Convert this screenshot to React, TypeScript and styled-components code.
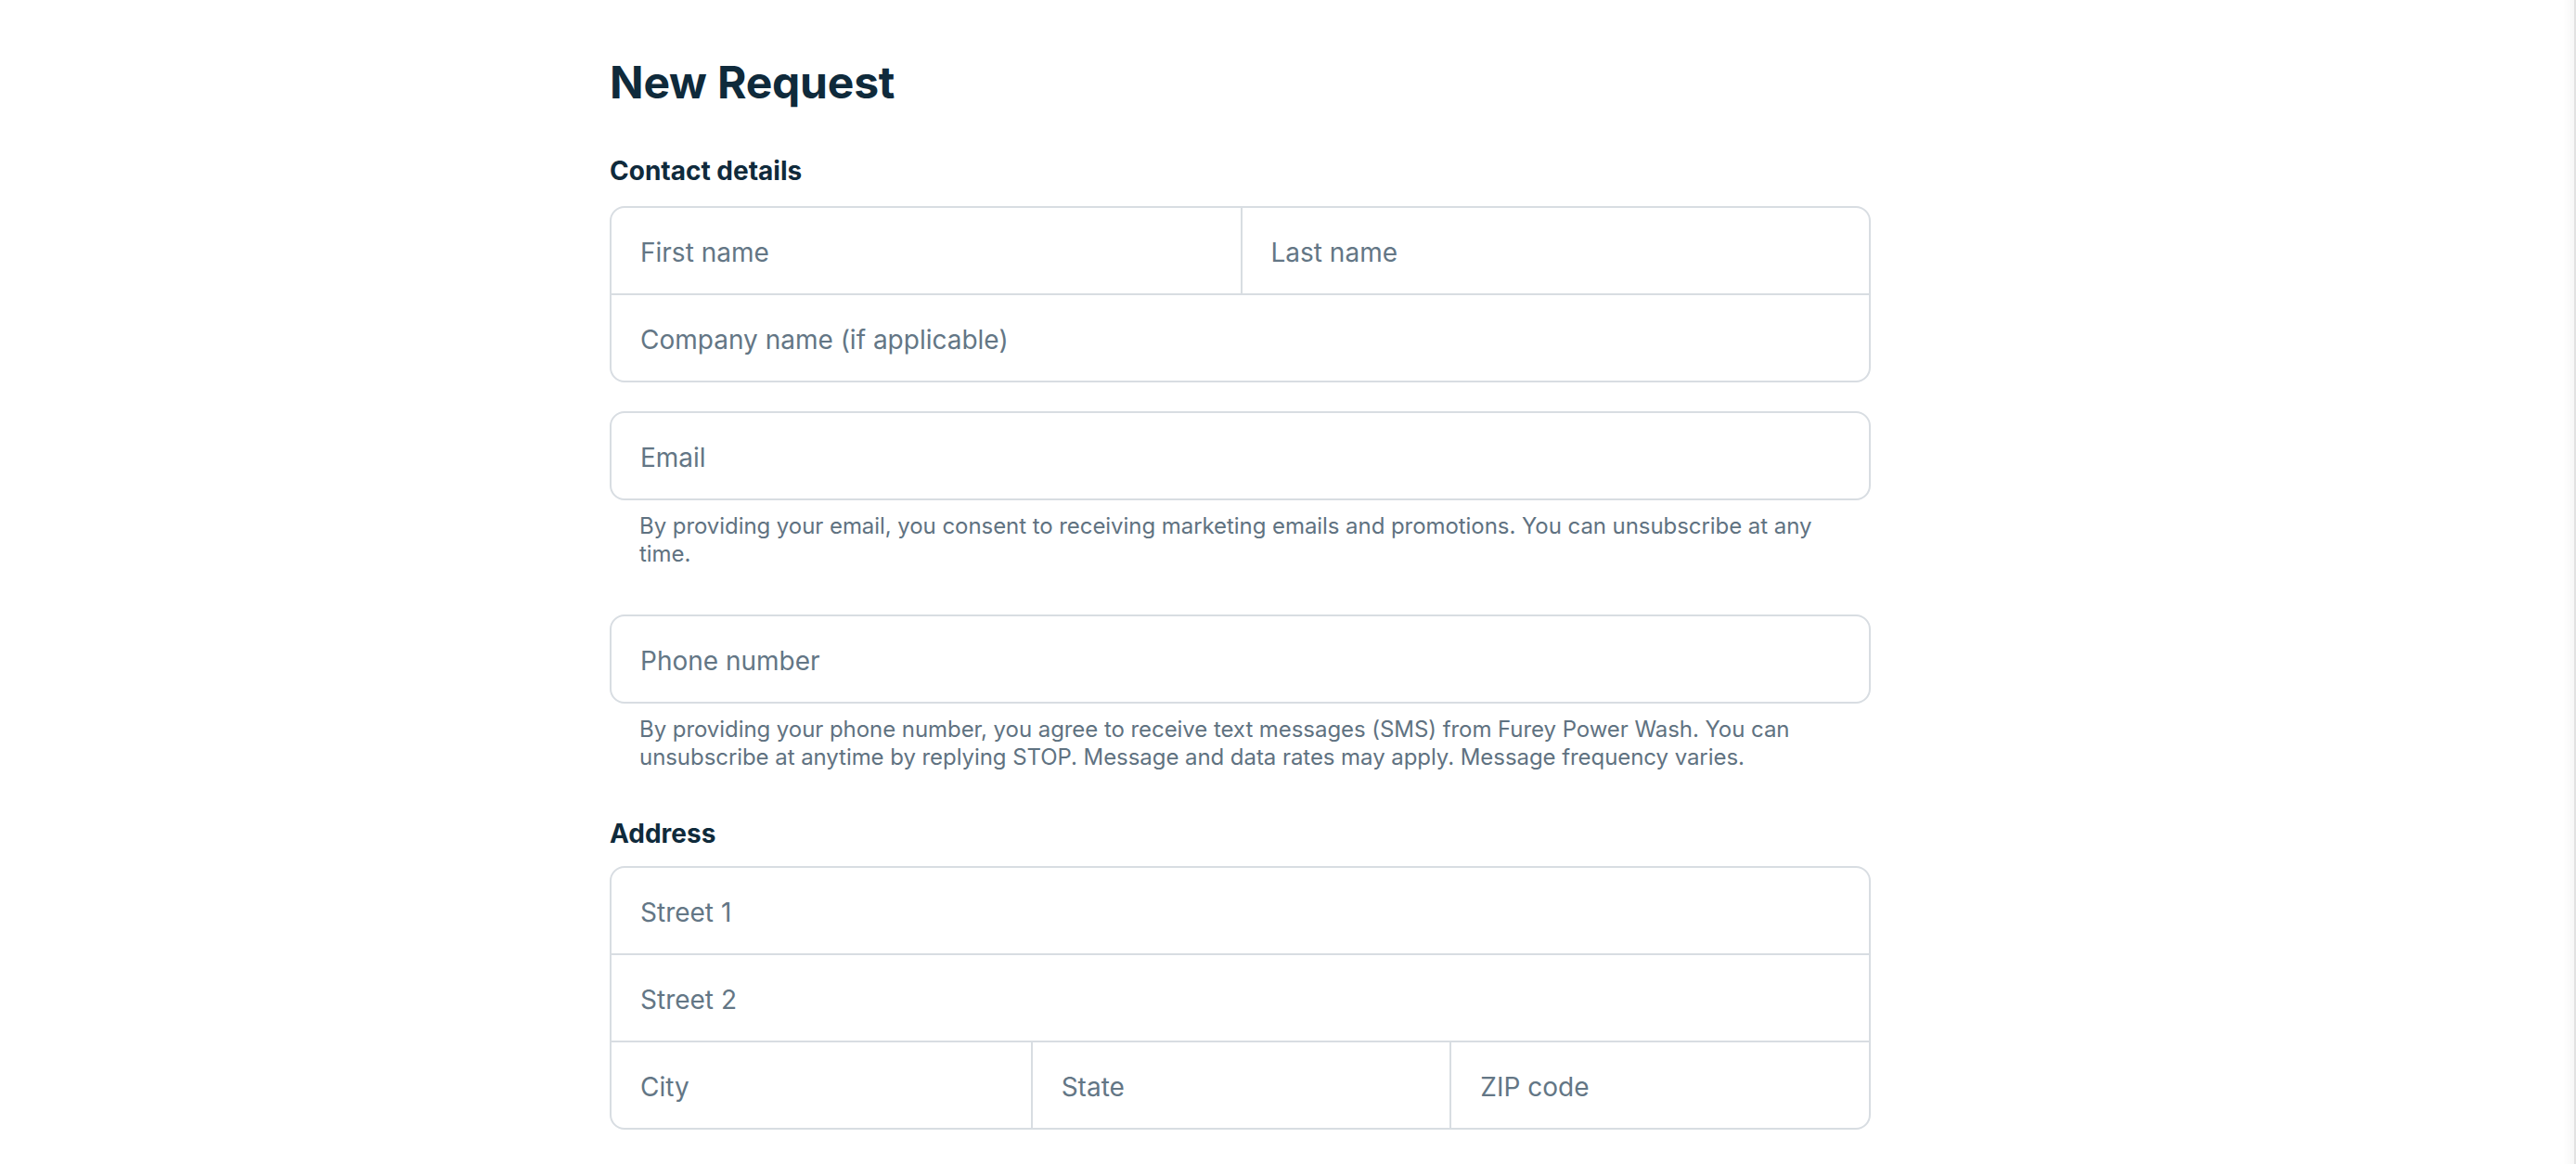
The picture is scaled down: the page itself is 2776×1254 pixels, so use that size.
import React from "react";
import styled, { createGlobalStyle } from "styled-components";

const GlobalStyle = createGlobalStyle`
  html, body {
    margin: 0;
    padding: 0;
    background: #ffffff;
  }
  body {
    font-family: Inter, "Noto Sans", "Liberation Sans", sans-serif;
    color: #0f2a3b;
    -webkit-font-smoothing: antialiased;
  }
  * { box-sizing: border-box; }
`;

const Page = styled.main`
  padding: 60px 0 0 657px;
`;

const Form = styled.form`
  width: 1359px;
  display: flex;
  flex-direction: column;
`;

const Title = styled.h1`
  margin: 0 0 49px;
  font-size: 48px;
  line-height: 58px;
  font-weight: 700;
  letter-spacing: -0.2px;
  color: #0f2a3b;
`;

const SectionHeading = styled.h2<{ $gap?: number }>`
  margin: 0 0 ${(p) => p.$gap ?? 21}px;
  font-size: 28px;
  line-height: 34px;
  font-weight: 700;
  color: #0f2a3b;
`;

const Groups = styled.div`
  display: flex;
  flex-direction: column;
  gap: 31px;
`;

const Group = styled.div<{ $spaced?: boolean }>`
  display: flex;
  flex-direction: column;
  padding-bottom: ${(p) => (p.$spaced ? "19px" : "0")};
`;

const Box = styled.div`
  display: flex;
  flex-direction: column;
  border: 2px solid #d8dde2;
  border-radius: 16px;
  overflow: hidden;
  background: #fff;
`;

const Row = styled.div<{ $cols?: number }>`
  display: grid;
  grid-template-columns: repeat(${(p) => p.$cols ?? 1}, 1fr);
  & + & {
    border-top: 2px solid #d8dde2;
  }
`;

const Field = styled.label`
  display: flex;
  align-items: center;
  height: 92px;
  padding: 3px 31px 0;
  font-size: 28px;
  line-height: 34px;
  color: #637685;
  cursor: text;
  & + & {
    border-left: 2px solid #d8dde2;
  }
`;

const Helper = styled.p`
  margin: 13px 0 0;
  padding: 0 32px;
  font-size: 24px;
  line-height: 30px;
  letter-spacing: -0.06px;
  color: #5f7281;
`;

const AddressSection = styled.section`
  display: flex;
  flex-direction: column;
`;

const EdgeShade = styled.div`
  position: fixed;
  top: 0;
  right: 0;
  bottom: 0;
  width: 14px;
  background: linear-gradient(to right, rgba(0, 0, 0, 0) 0%, rgba(0, 0, 0, 0.03) 85%, #e2e2e2 86%, #e2e2e2 100%);
  pointer-events: none;
`;

export default function App() {
  return (
    <>
      <GlobalStyle />
      <Page>
        <Form onSubmit={(e) => e.preventDefault()}>
          <Title>New Request</Title>
          <SectionHeading>Contact details</SectionHeading>
          <Groups>
            <Box>
              <Row $cols={2}>
                <Field>First name</Field>
                <Field>Last name</Field>
              </Row>
              <Row>
                <Field>Company name (if applicable)</Field>
              </Row>
            </Box>
            <Group $spaced>
              <Box>
                <Row>
                  <Field>Email</Field>
                </Row>
              </Box>
              <Helper>
                By providing your email, you consent to receiving marketing emails and promotions. You can
                unsubscribe at any time.
              </Helper>
            </Group>
            <Group $spaced>
              <Box>
                <Row>
                  <Field>Phone number</Field>
                </Row>
              </Box>
              <Helper>
                By providing your phone number, you agree to receive text messages (SMS) from Furey Power Wash.
                You can unsubscribe at anytime by replying STOP. Message and data rates may apply. Message
                frequency varies.
              </Helper>
            </Group>
            <AddressSection>
              <SectionHeading $gap={18}>Address</SectionHeading>
              <Box>
                <Row>
                  <Field>Street 1</Field>
                </Row>
                <Row>
                  <Field>Street 2</Field>
                </Row>
                <Row $cols={3}>
                  <Field>City</Field>
                  <Field>State</Field>
                  <Field>ZIP code</Field>
                </Row>
              </Box>
            </AddressSection>
          </Groups>
        </Form>
      </Page>
      <EdgeShade />
    </>
  );
}
